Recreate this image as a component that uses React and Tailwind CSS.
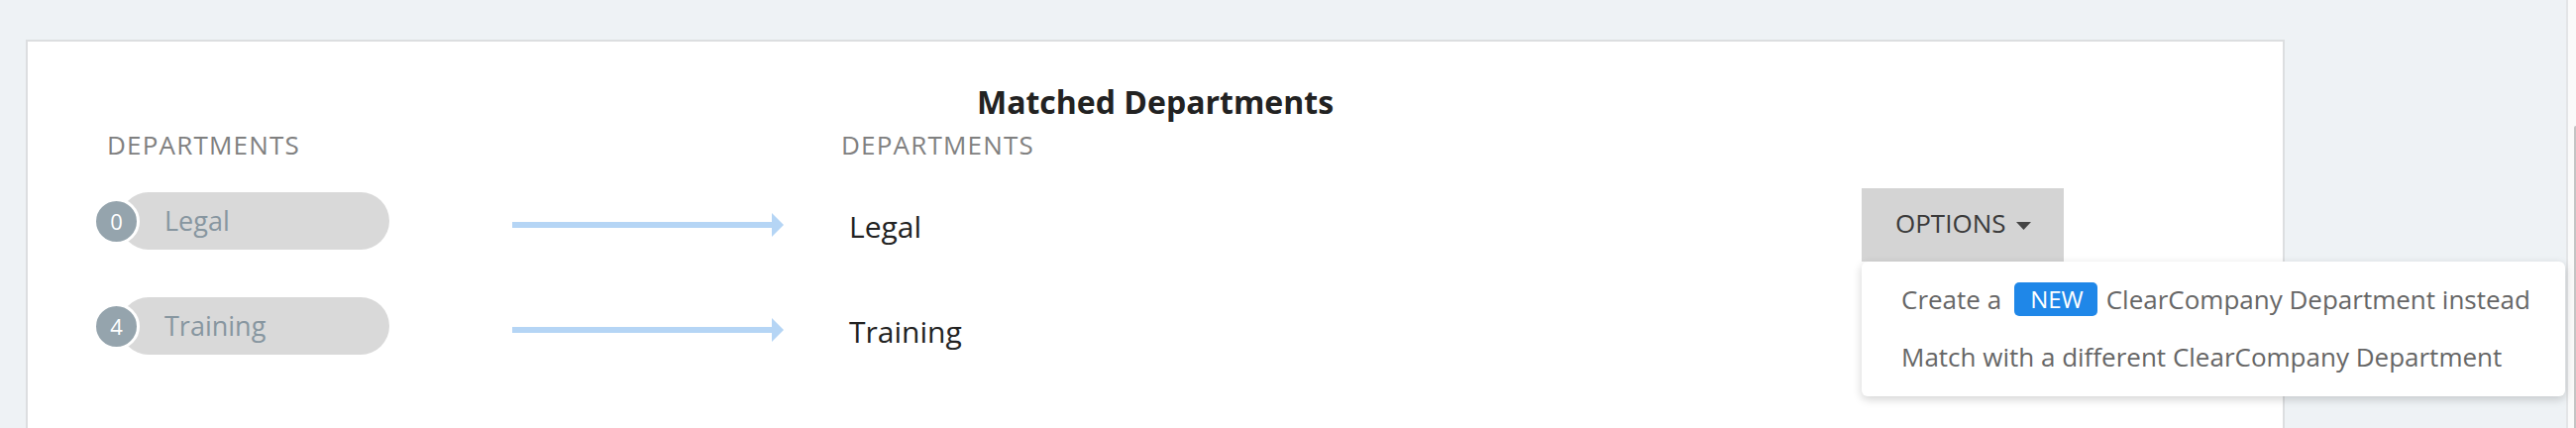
import React from 'react';

const rows = [
  { count: 0, name: 'Legal', match: 'Legal', options: true },
  { count: 4, name: 'Training', match: 'Training', options: false },
];

const Pill = ({ count, name }) => (
  <div className="flex items-center w-[299px] h-[58px] mb-[8px]">
    <div className="relative z-10 flex items-center justify-center w-[47px] h-[47px] shrink-0 rounded-full border-[3px] border-white bg-[#95a4ad] text-white text-[22px] leading-none">
      {count}
    </div>
    <div className="flex items-center h-[58px] flex-1 -ml-[20px] pl-[45px] rounded-full bg-[#d9d9d9] text-[#8796a0] text-[27px]">
      {name}
    </div>
  </div>
);

const Arrow = () => (
  <svg width="274" height="24" viewBox="0 0 274 24" className="ml-[124px] shrink-0">
    <rect x="0" y="9" width="263" height="6" fill="#b5d5f5" />
    <polygon points="262,0 274,12 262,24" fill="#b5d5f5" />
  </svg>
);

const OptionsMenu = () => (
  <div className="relative">
    <button className="flex items-center h-[74px] w-[204px] pl-[34px] pb-[4px] bg-[#d4d4d4] text-[#3a3a3a] text-[26px]">
      OPTIONS
      <svg width="15" height="8" viewBox="0 0 15 8" className="ml-[10px] mt-[6px]">
        <polygon points="0,0 15,0 7.5,8" fill="#444" />
      </svg>
    </button>
    <div className="absolute top-full left-0 z-20 w-[710px] pt-[9px] pb-[11px] bg-white rounded-[6px] shadow-[0_3px_10px_rgba(0,0,0,0.18)] text-[#666] text-[26px]">
      <div className="flex items-center h-[58px] pl-[40px] whitespace-nowrap">
        <span>Create a</span>
        <span className="ml-[13px] flex items-center h-[34px] pl-[16px] pr-[14px] rounded-[5px] bg-[#1f87e8] text-white text-[24px]">
          NEW
        </span>
        <span className="ml-[9px]">ClearCompany Department instead</span>
      </div>
      <div className="flex items-center h-[58px] pl-[40px] whitespace-nowrap">
        Match with a different ClearCompany Department
      </div>
    </div>
  </div>
);

export default function App() {
  return (
    <div className="flex w-[2600px] h-[432px] overflow-hidden bg-[#eef2f5] font-['Open_Sans',sans-serif]">
      <div className="flex-1 pl-[26px] pt-[40px]">
        <div className="w-[2280px] h-[420px] bg-white border-2 border-[#dcdee0] pt-[45px]">
          <h2 className="text-center text-[32px] leading-[32px] font-bold text-[#222]">
            Matched Departments
          </h2>
          <div className="flex mt-[14px] text-[26px] leading-[26px] tracking-[1.2px] text-[#808080]">
            <span className="ml-[80px] w-[741px]">DEPARTMENTS</span>
            <span>DEPARTMENTS</span>
          </div>
          <div className="flex flex-col gap-[32px] mt-[31px]">
            {rows.map((row) => (
              <div key={row.name} className="flex items-center h-[74px] pl-[66px]">
                <Pill count={row.count} name={row.name} />
                <Arrow />
                <span className="ml-[66px] w-[1022px] pt-[2px] text-[30px] text-[#222]">{row.match}</span>
                {row.options && <OptionsMenu />}
              </div>
            ))}
          </div>
        </div>
      </div>
      <div className="w-[10px] border-l-2 border-[#e3e5e7] bg-[#fafafa] pt-[127px] pl-[6px]">
        <div className="w-[4px] h-full rounded-tl-[2px] bg-[#c4c4c4]" />
      </div>
    </div>
  );
}
